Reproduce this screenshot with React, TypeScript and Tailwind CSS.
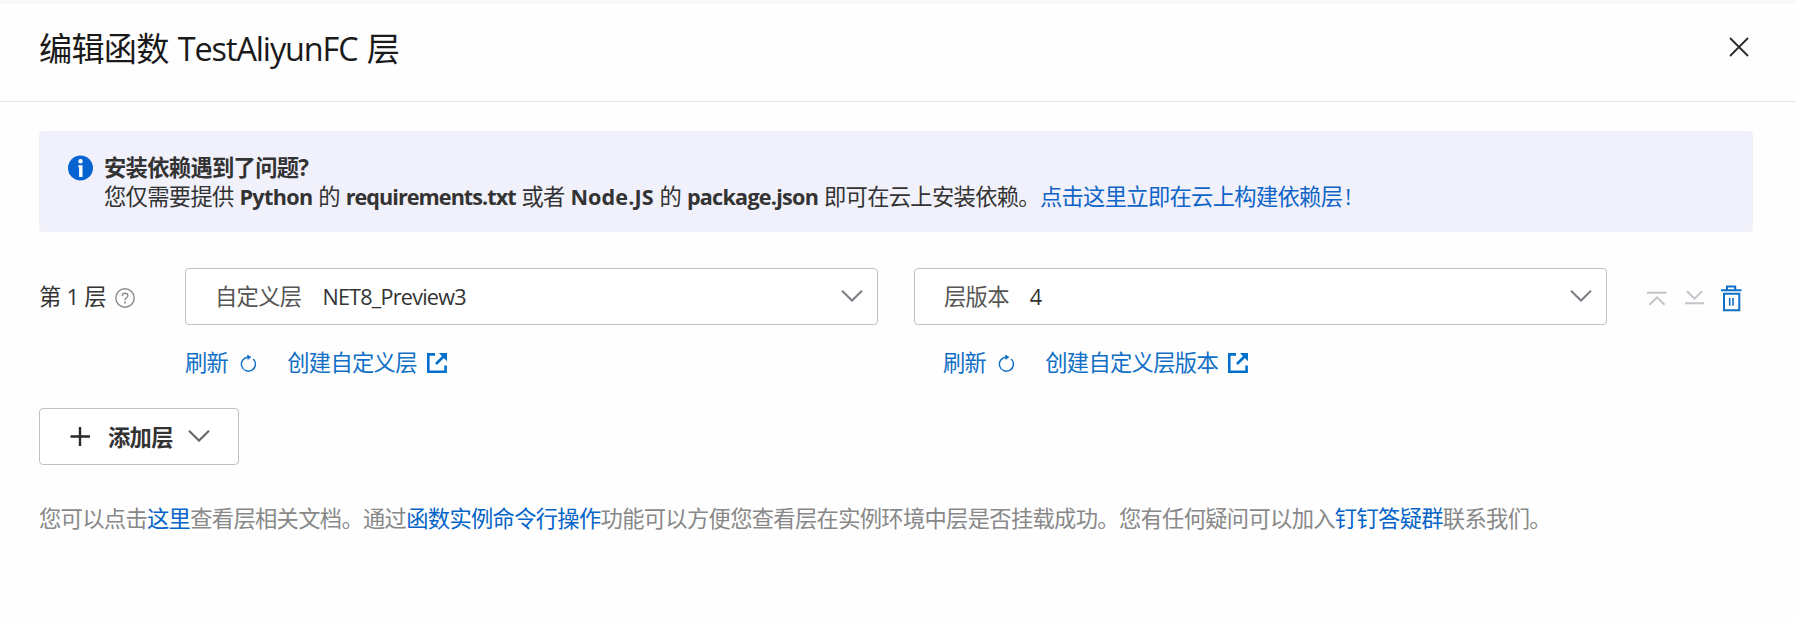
import React from 'react';

function InfoIcon() {
  return (
    <svg className="h-[26px] w-[26px] shrink-0" viewBox="0 0 26 26">
      <circle cx="12.5" cy="13" r="12.5" fill="#0564d2" />
      <circle cx="12.5" cy="6.2" r="2.2" fill="#fff" />
      <path d="M10.2 10.2h4.3v11.8h-3.4v-9.8h-.9z" fill="#fff" />
    </svg>
  );
}

function Caret({ color }: { color: string }) {
  return (
    <svg className="h-3 w-[22px] shrink-0" viewBox="0 0 22 12" fill="none" stroke={color} strokeWidth="2.1">
      <path d="M1 .8 11 10.6 21 .8" />
    </svg>
  );
}

function HelpIcon() {
  return (
    <svg className="h-5 w-5" viewBox="0 0 20 20" fill="none" stroke="#8b8b8f" strokeWidth="1.4">
      <circle cx="10" cy="10" r="9.2" />
      <path d="M7.3 7.9c0-1.7 1.2-2.7 2.8-2.7s2.7 1 2.7 2.5c0 2.1-2.8 2.2-2.8 4.6" />
      <path d="M10 13.6v1.8" strokeWidth="1.7" />
    </svg>
  );
}

function RefreshIcon() {
  return (
    <svg className="h-[18px] w-4" viewBox="0 0 16 18" fill="none" stroke="#0f6fc6" strokeWidth="1.4">
      <path d="M8.4 3.2A7 7 0 1 0 13.2 5.1" />
      <path d="M7.2.4 11.4 3 7.6 6z" fill="#0f6fc6" stroke="none" />
    </svg>
  );
}

function ExternalIcon() {
  return (
    <svg className="h-5 w-5" viewBox="0 0 20 20" fill="none" stroke="#0070cc" strokeWidth="2.6">
      <path d="M8 1.4H1.3v17.3h17.3V12.4" />
      <path d="M9 11 16.5 3.5" />
      <path d="M11.8 0H20v8.2z" fill="#0070cc" stroke="none" />
    </svg>
  );
}

function Select({ label, value }: { label: string; value: string }) {
  return (
    <div className="flex h-[57px] w-[693px] items-center rounded-[4px] border border-[#c0c0cb] bg-white pr-[14px] pl-[29px]">
      <span className="text-[#555]">{label}</span>
      <span className="ml-[21px] flex-1 text-[21.6px] tracking-[-0.77px] text-[#333]">{value}</span>
      <span className="-mt-[2px] flex">
        <Caret color="#808088" />
      </span>
    </div>
  );
}

function Links({ create }: { create: string }) {
  return (
    <div className="flex h-[29px] items-center text-[#0f6fc6]">
      <a>刷新</a>
      <span className="ml-[12px]">
        <RefreshIcon />
      </span>
      <a className="ml-[31px]">{create}</a>
      <span className="ml-[10px]">
        <ExternalIcon />
      </span>
    </div>
  );
}

export default function App() {
  return (
    <div
      lang="zh-CN"
      className="flex h-[621px] w-[1796px] flex-col bg-[#fefefe] font-['Open_Sans','Noto_Sans_CJK_SC',sans-serif] text-[22.3px] leading-[29px] tracking-[-0.7px] [word-spacing:0.7px] whitespace-nowrap text-[#333]"
    >
      <div className="h-1 bg-[#f8f8f8]" />
      <header className="flex h-[98px] items-start justify-between border-b border-[#e5e5e7] pr-[47.5px] pl-[39px]">
        <h1 className="mt-[22px] text-[33.2px] leading-[44px] font-normal tracking-[-0.8px] [word-spacing:1.4px] text-[#1a1a1a]">
          编辑函数 <span className="text-[32.4px] tracking-[-1.1px]">TestAliyunFC</span> 层
        </h1>
        <svg className="mt-[33px] h-5 w-5" viewBox="0 0 20 20" stroke="#2a2a2a" strokeWidth="1.8">
          <path d="M1 1 19 19M19 1 1 19" />
        </svg>
      </header>

      <main className="flex flex-col pt-[29px] pr-[43px] pl-[39px]">
        <section className="flex h-[101px] rounded-[4px] bg-[#f1f1fb] pt-[22px] pl-[29px]">
          <span className="mt-[2px]">
            <InfoIcon />
          </span>
          <div className="ml-[10px]">
            <p className="font-bold">安装依赖遇到了问题?</p>
            <p>
              您仅需要提供 <b className="text-[21.6px] tracking-[-0.65px]">Python</b> 的{' '}
              <b className="text-[21.6px] tracking-[-0.95px]">requirements.txt</b> 或者{' '}
              <b className="text-[21.6px] tracking-[0.1px]">Node.JS</b> 的{' '}
              <b className="text-[21.6px] tracking-[-0.75px]">package.json</b> 即可在云上安装依赖。
              <a className="text-[#0f64c8]">
                点击这里立即在云上构建依赖层<span className="ml-[3px]">!</span>
              </a>
            </p>
          </div>
        </section>

        <section className="mt-9 flex items-start">
          <div className="flex h-[57px] w-[146px] items-center">
            <span>第 1 层</span>
            <span className="mt-[2px] ml-[9px]">
              <HelpIcon />
            </span>
          </div>
          <div className="flex flex-col gap-[23px]">
            <Select label="自定义层" value="NET8_Preview3" />
            <Links create="创建自定义层" />
          </div>
          <div className="ml-[36px] flex flex-col gap-[23px]">
            <Select label="层版本" value="4" />
            <div className="pl-[29px]">
              <Links create="创建自定义层版本" />
            </div>
          </div>
          <div className="ml-[40px] flex h-[57px] items-center">
            <svg className="h-5 w-5" viewBox="0 0 20 20" fill="none" stroke="#c3c3c9" strokeWidth="2">
              <path d="M0 5.7h19.5M2.5 17.7l7.5-7.4 7.5 7.4" />
            </svg>
            <svg className="ml-[18px] h-5 w-5" viewBox="0 0 20 20" fill="none" stroke="#c3c3c9" strokeWidth="2">
              <path d="M0 16.3h19M2 4.2l7.5 7.4L17 4.2" />
            </svg>
            <svg
              className="mt-[3px] ml-[16px] h-[27px] w-[21px]"
              viewBox="0 0 21 27"
              fill="none"
              stroke="#0f70c8"
              strokeWidth="2"
            >
              <path d="M0 5.2h20.5M6 5V1.5h8.2V5M3 8.8h15.3v16.4H3z" />
              <path d="M8.7 13v7.8M12 13v7.8" strokeWidth="1.6" />
            </svg>
          </div>
        </section>

        <button className="mt-[31px] flex h-[57px] w-[200px] items-center rounded-[4px] border border-[#c0c0cb] bg-white pl-[30px]">
          <svg className="h-5 w-5" viewBox="0 0 20 20" stroke="#2a2a2a" strokeWidth="2.4">
            <path d="M10 0v19M.5 9.5h19.5" />
          </svg>
          <span className="mt-[1px] ml-[18px] font-bold">添加层</span>
          <span className="-mt-[2px] ml-[15px] flex">
            <Caret color="#666" />
          </span>
        </button>

        <p className="mt-[39px] text-[#888]">
          您可以点击<a className="text-[#0564c8]">这里</a>查看层相关文档。通过
          <a className="text-[#0564c8]">函数实例命令行操作</a>
          功能可以方便您查看层在实例环境中层是否挂载成功。您有任何疑问可以加入
          <a className="text-[#0564c8]">钉钉答疑群</a>联系我们。
        </p>
      </main>
    </div>
  );
}
